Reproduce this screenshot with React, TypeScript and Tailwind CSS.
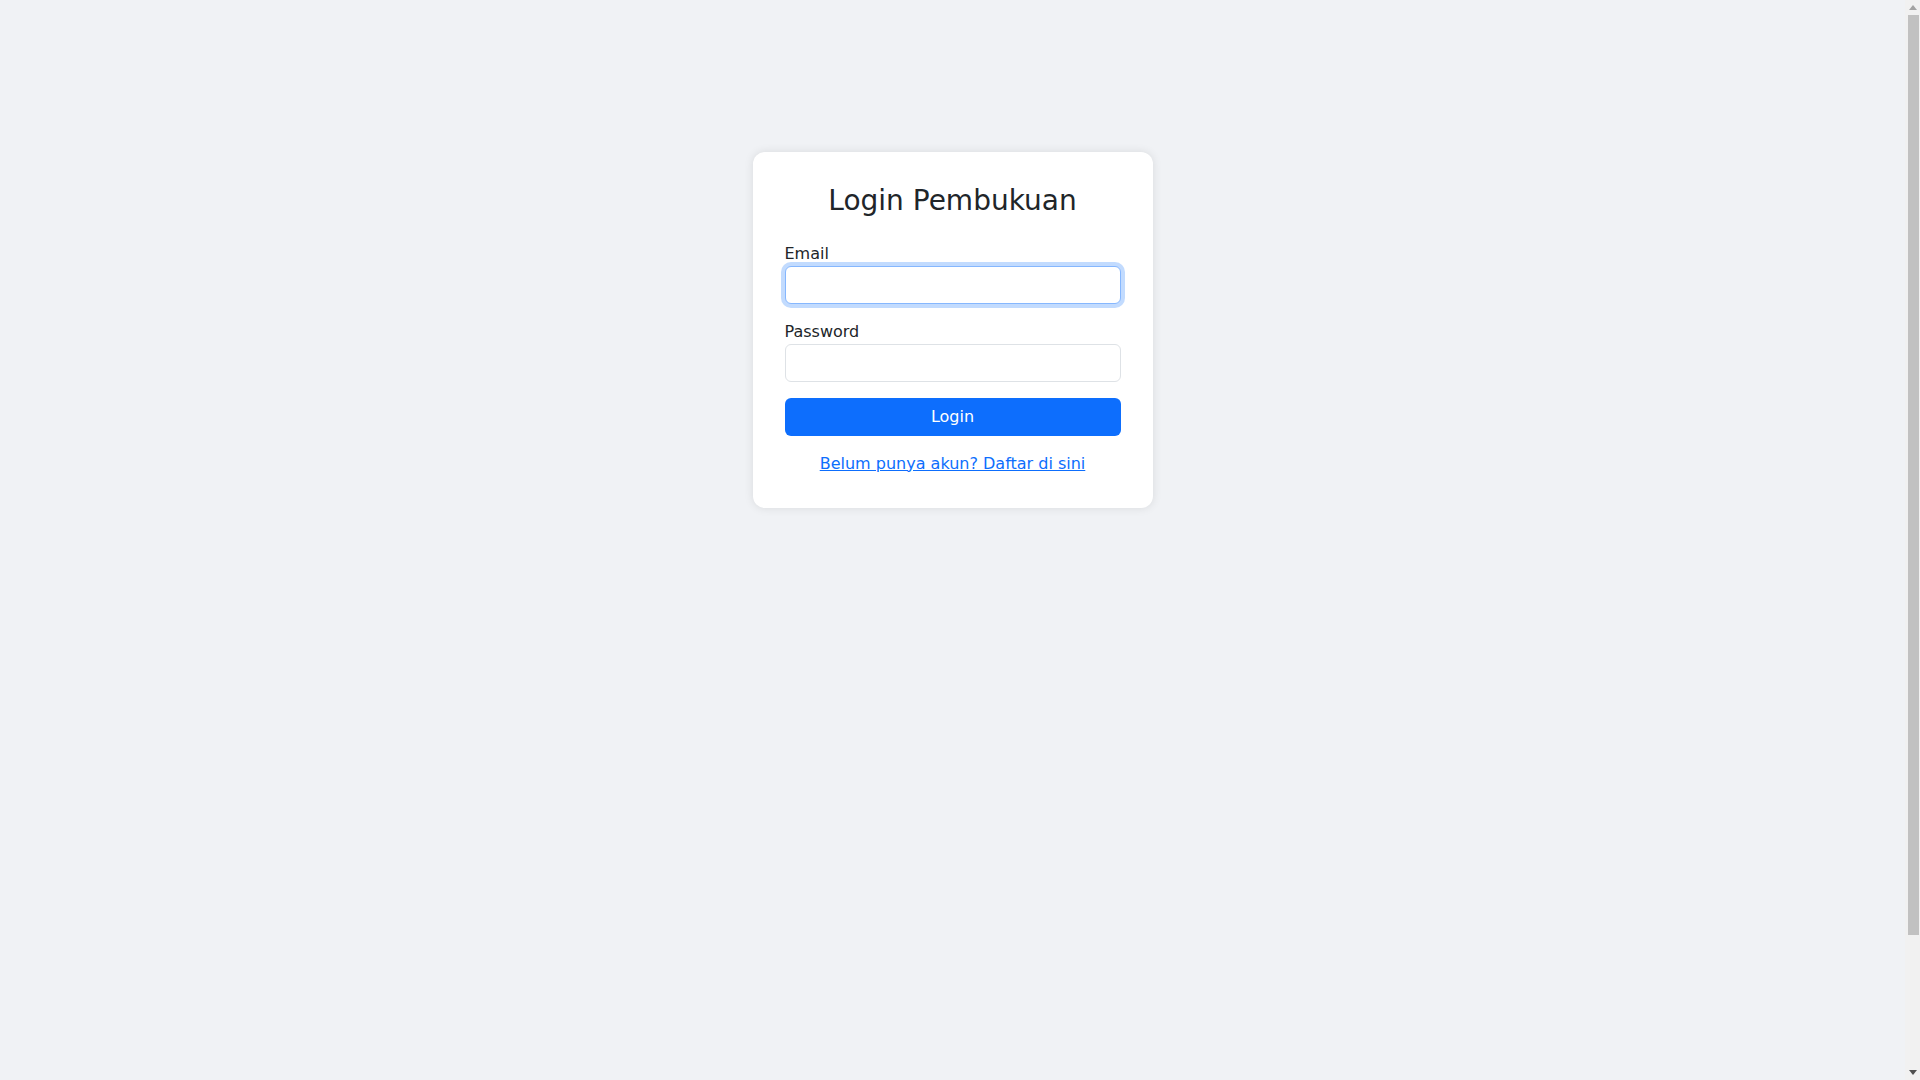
import React, { useState } from 'react';

// Drawing of the browser's vertical scrollbar seen in the screenshot
const Scrollbar: React.FC = () => (
    <div className="fixed top-0 right-0 bottom-0 flex w-[15px] flex-col items-center bg-[#f1f1f1]">
        <div className="flex h-[15px] w-full items-center justify-center">
            <svg width="8" height="5" viewBox="0 0 8 5"><path d="M0 5 L4 0 L8 5 Z" fill="#a3a3a3" /></svg>
        </div>
        <div className="ml-[1px] h-[920px] w-[11px] bg-[#c1c1c1]" />
        <div className="flex-1" />
        <div className="flex h-[15px] w-full items-center justify-center">
            <svg width="8" height="5" viewBox="0 0 8 5"><path d="M0 0 L8 0 L4 5 Z" fill="#505050" /></svg>
        </div>
    </div>
);

const App: React.FC = () => {
    const [email, setEmail] = useState('');
    const [password, setPassword] = useState('');

    return (
        <div
            className="box-content min-h-screen bg-[#f0f2f5] pt-[152px] pr-[15px] text-[#212529]"
            style={{ fontFamily: '"DejaVu Sans", sans-serif' }}
        >
            <div className="mx-auto w-[400px] rounded-[12px] bg-white p-8 shadow-[0_0_10px_rgba(0,0,0,0.1)]">
                <h3 className="mb-6 text-center text-[28px] leading-[1.2] font-normal">Login Pembukuan</h3>

                <form onSubmit={(e) => e.preventDefault()}>
                    {/* Email */}
                    <div className="mb-4">
                        <label htmlFor="email" className="block text-base leading-6">Email</label>
                        <input
                            id="email"
                            type="email"
                            autoFocus
                            value={email}
                            onChange={(e) => setEmail(e.target.value)}
                            className="block h-[38px] w-full rounded-[6px] border border-[#86b7fe] bg-white px-3 text-base outline-none shadow-[0_0_0_4px_rgba(13,110,253,0.25)] caret-[#212529]"
                        />
                    </div>

                    {/* Password */}
                    <div className="mb-4">
                        <label htmlFor="password" className="block text-base leading-6">Password</label>
                        <input
                            id="password"
                            type="password"
                            value={password}
                            onChange={(e) => setPassword(e.target.value)}
                            className="block h-[38px] w-full rounded-[6px] border border-[#dee2e6] bg-white px-3 text-base outline-none"
                        />
                    </div>

                    <button
                        type="submit"
                        className="block h-[38px] w-full rounded-[6px] bg-[#0d6efd] text-base text-white"
                    >
                        Login
                    </button>
                </form>

                <div className="mt-4 text-center text-base leading-6">
                    <a href="#" className="text-[#0d6efd] underline">Belum punya akun? Daftar di sini</a>
                </div>
            </div>
            <Scrollbar />
        </div>
    );
};

export default App;
